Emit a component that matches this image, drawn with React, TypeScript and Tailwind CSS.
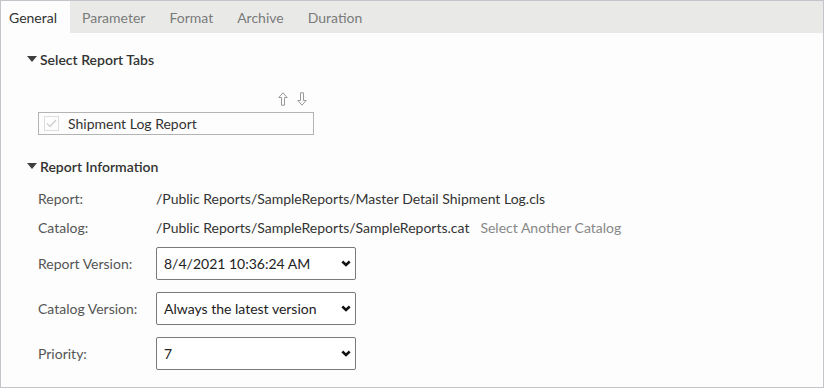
import { ReactNode } from "react"

const tabs = ["General", "Parameter", "Format", "Archive", "Duration"]

function Caret() {
  return (
    <svg width="10" height="6" viewBox="0 0 10 6" className="mr-[3px] -ml-[1px]">
      <polygon points="0,0 10,0 5,6" fill="#3f3f3f" />
    </svg>
  )
}

function Heading({ children }: { children: ReactNode }) {
  return (
    <div className="flex items-center h-[20px] pl-[27px] text-[14px] font-semibold text-[#333]">
      <Caret />
      {children}
    </div>
  )
}

function Chevron() {
  return (
    <svg width="10" height="7" viewBox="0 0 10 7">
      <polyline points="1.3,1.5 5,5 8.7,1.5" fill="none" stroke="#111" strokeWidth="2.5" />
    </svg>
  )
}

function SelectRow({ label, value, className }: { label: string; value: string; className?: string }) {
  return (
    <div className={`flex items-center pl-[37px] ${className ?? ""}`}>
      <span className="w-[118px] text-[#555]">{label}</span>
      <div className="w-[200px] h-[33px] border border-[#7a7a7a] rounded-[2px] bg-white flex items-center justify-between pl-[7px] pr-[4px] text-[#222]">
        <span>{value}</span>
        <Chevron />
      </div>
    </div>
  )
}

function Arrow({ down }: { down?: boolean }) {
  return (
    <svg width="10" height="14" viewBox="0 0 10 14" className={down ? "rotate-180" : ""}>
      <polygon points="5,0.8 9.2,5.5 6.5,5.5 6.5,13.2 3.5,13.2 3.5,5.5 0.8,5.5" fill="none" stroke="#9a9a9a" strokeWidth="1" />
    </svg>
  )
}

export default function App() {
  return (
    <div className="w-[824px] h-[388px] border border-[#c6c3ca] bg-[#fcfdfc] font-['Lato',sans-serif] text-[14px] overflow-hidden">
      {/* tab strip */}
      <div className="flex h-[32px] bg-[#e9eae8]">
        {tabs.map((t, i) => (
          <div
            key={t}
            className={
              i === 0
                ? "w-[69px] bg-[#fcfdfc] text-[#333] flex items-center pl-[8px]"
                : "flex items-center px-[12px] text-[#7a7a7a]"
            }
          >
            {t}
          </div>
        ))}
      </div>

      <div className="mt-[16px]">
        <Heading>Select Report Tabs</Heading>
      </div>

      <div className="mt-[23px] w-[313px] flex justify-end gap-[9px] pr-[7px]">
        <Arrow />
        <Arrow down />
      </div>

      <div className="ml-[37px] mt-[6px] w-[276px] h-[23px] border border-[#b4b4b4] flex items-center pl-[5px]">
        <div className="w-[15px] h-[15px] border border-[#dedede] flex items-center justify-center">
          <svg width="11" height="9" viewBox="0 0 11 9">
            <polyline points="1,4.5 4,7.5 10,1" fill="none" stroke="#cfcfcf" strokeWidth="1.4" />
          </svg>
        </div>
        <span className="ml-[9px] text-[#333]">Shipment Log Report</span>
      </div>

      <div className="mt-[21px]">
        <Heading>Report Information</Heading>
      </div>

      <div className="mt-[12px] h-[20px] flex items-center pl-[37px]">
        <span className="w-[118px] text-[#555]">Report:</span>
        <span className="text-[#333]">/Public Reports/SampleReports/Master Detail Shipment Log.cls</span>
      </div>

      <div className="mt-[9px] h-[20px] flex items-center pl-[37px]">
        <span className="w-[118px] text-[#555]">Catalog:</span>
        <span className="text-[#333]">/Public Reports/SampleReports/SampleReports.cat</span>
        <span className="ml-[11px] text-[#888]">Select Another Catalog</span>
      </div>

      <SelectRow className="mt-[10px]" label="Report Version:" value="8/4/2021 10:36:24 AM" />
      <SelectRow className="mt-[12px]" label="Catalog Version:" value="Always the latest version" />
      <SelectRow className="mt-[12px]" label="Priority:" value="7" />
    </div>
  )
}
